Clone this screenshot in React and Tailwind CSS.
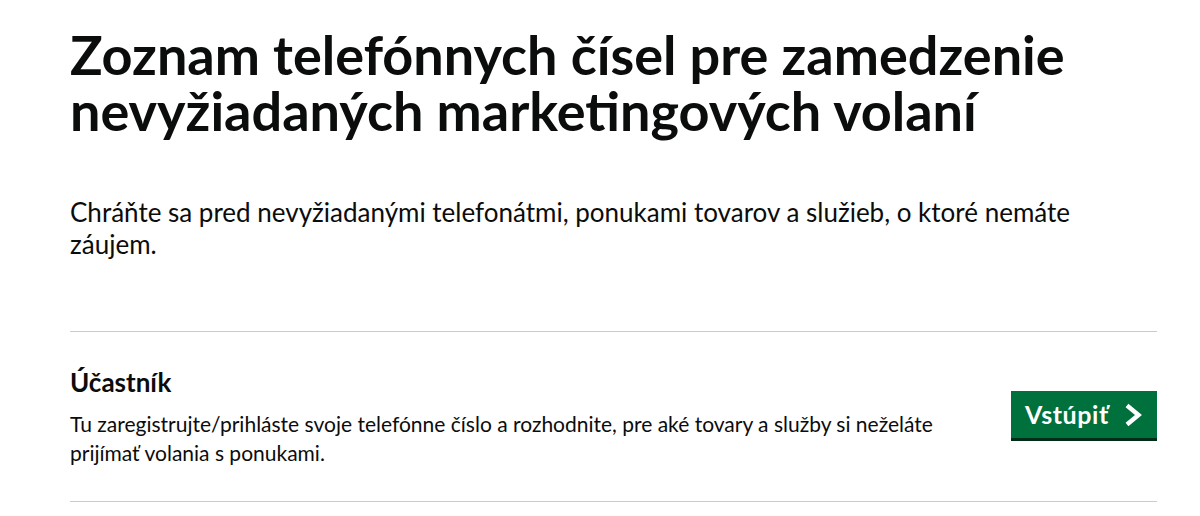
import React from "react";

export default function App() {
  return (
    <div className="min-h-[516px] bg-white text-[#0b0c0c]">
      <div className="ml-[70px] w-[1087px] pt-[27px] font-['Lato',_sans-serif]">
        <h1 className="text-[54px] leading-[56px] font-bold">
          Zoznam telefónnych čísel pre zamedzenie nevyžiadaných marketingových volaní
        </h1>
        <p className="mt-[57px] text-[26px] leading-[32px]">
          Chráňte sa pred nevyžiadanými telefonátmi, ponukami tovarov a služieb, o ktoré nemáte záujem.
        </p>
        <div className="mt-[71px] border-t border-[#cbcbcb]" />
        <div className="flex items-center justify-between pt-[35px] pb-[34px]">
          <div className="w-[880px]">
            <h2 className="text-[26px] leading-[30px] font-bold">Účastník</h2>
            <p className="mt-[12px] text-[21px] leading-[29px]">
              Tu zaregistrujte/prihláste svoje telefónne číslo a rozhodnite, pre aké tovary a služby si neželáte prijímať volania s ponukami.
            </p>
          </div>
          <button className="mb-[5px] flex h-[47px] w-[146px] items-center justify-between bg-[#00703c] pl-[14px] pr-[14px] text-[25px] font-bold leading-none text-white shadow-[0_3px_0_#002d18]">
            <span className="tracking-[0.6px]">Vstúpiť</span>
            <svg width="20" height="24" viewBox="0 0 20 24" fill="none">
              <polyline points="4,2.5 15.5,12 4,21.5" stroke="white" strokeWidth="4.4" strokeLinecap="butt" strokeLinejoin="miter" />
            </svg>
          </button>
        </div>
        <div className="border-t border-[#cbcbcb]" />
      </div>
    </div>
  );
}
